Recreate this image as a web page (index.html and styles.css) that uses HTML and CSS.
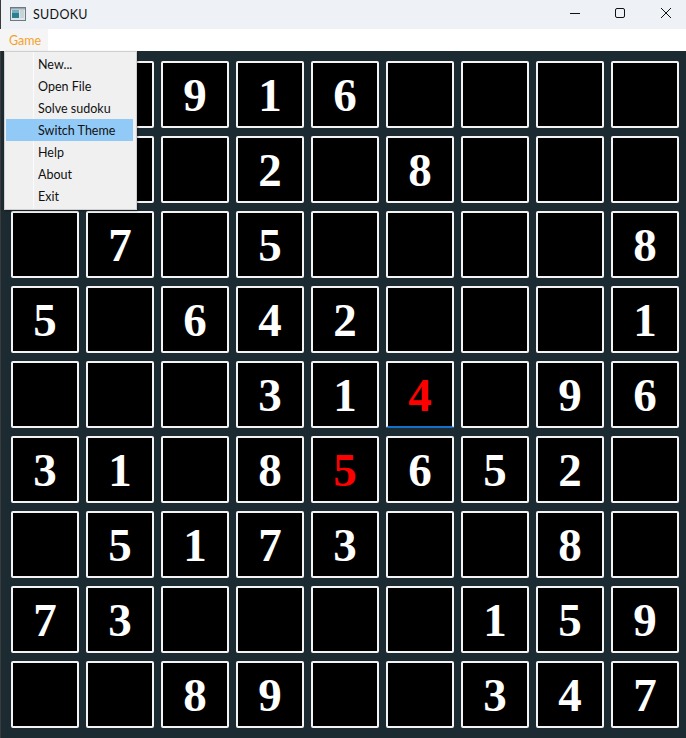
FILE: index.html
```html
<!DOCTYPE html>
<html>
<head>
<meta charset="utf-8">
<link rel="stylesheet" href="styles.css">
</head>
<body>
<div class="window">
  <div class="titlebar">
    <svg class="appicon" width="16" height="14" viewBox="0 0 16 14">
      <rect x="0.5" y="0.5" width="15" height="13" fill="#dfe6ea" stroke="#6c7a80"/>
      <rect x="2" y="3" width="7" height="8" fill="#2e7f8c"/>
      <rect x="2" y="3" width="7" height="3" fill="#6fb0c8"/>
      <rect x="10" y="3" width="4" height="8" fill="#c9d4d8"/>
      <rect x="1" y="1" width="14" height="1.5" fill="#9aa8ae"/>
    </svg>
    <span class="title">SUDOKU</span>
    <div class="controls">
      <svg class="ctl" width="46" height="29" viewBox="0 0 46 29"><line x1="22" y1="13.5" x2="32" y2="13.5" stroke="#111" stroke-width="1"/></svg>
      <svg class="ctl" width="46" height="29" viewBox="0 0 46 29"><rect x="21.5" y="8.5" width="9" height="9" rx="1.5" fill="none" stroke="#111" stroke-width="1"/></svg>
      <svg class="ctl" width="46" height="29" viewBox="0 0 46 29"><path d="M21 8 L31 18 M31 8 L21 18" stroke="#111" stroke-width="1"/></svg>
    </div>
  </div>
  <div class="menubar"><span class="menu-game">Game</span></div>
  <div class="board">
    <div class="grid">
      <div class="cell"></div><div class="cell"></div><div class="cell">9</div><div class="cell">1</div><div class="cell">6</div><div class="cell"></div><div class="cell"></div><div class="cell"></div><div class="cell"></div>
      <div class="cell"></div><div class="cell"></div><div class="cell"></div><div class="cell">2</div><div class="cell"></div><div class="cell">8</div><div class="cell"></div><div class="cell"></div><div class="cell"></div>
      <div class="cell"></div><div class="cell">7</div><div class="cell"></div><div class="cell">5</div><div class="cell"></div><div class="cell"></div><div class="cell"></div><div class="cell"></div><div class="cell">8</div>
      <div class="cell">5</div><div class="cell"></div><div class="cell">6</div><div class="cell">4</div><div class="cell">2</div><div class="cell"></div><div class="cell"></div><div class="cell"></div><div class="cell">1</div>
      <div class="cell"></div><div class="cell"></div><div class="cell"></div><div class="cell">3</div><div class="cell">1</div><div class="cell red focus">4</div><div class="cell"></div><div class="cell">9</div><div class="cell">6</div>
      <div class="cell">3</div><div class="cell">1</div><div class="cell"></div><div class="cell">8</div><div class="cell red">5</div><div class="cell">6</div><div class="cell">5</div><div class="cell">2</div><div class="cell"></div>
      <div class="cell"></div><div class="cell">5</div><div class="cell">1</div><div class="cell">7</div><div class="cell">3</div><div class="cell"></div><div class="cell"></div><div class="cell">8</div><div class="cell"></div>
      <div class="cell">7</div><div class="cell">3</div><div class="cell"></div><div class="cell"></div><div class="cell"></div><div class="cell"></div><div class="cell">1</div><div class="cell">5</div><div class="cell">9</div>
      <div class="cell"></div><div class="cell"></div><div class="cell">8</div><div class="cell">9</div><div class="cell"></div><div class="cell"></div><div class="cell">3</div><div class="cell">4</div><div class="cell">7</div>
    </div>
  </div>
  <div class="popup">
    <div class="item">New...</div>
    <div class="item">Open File</div>
    <div class="item">Solve sudoku</div>
    <div class="item hl">Switch Theme</div>
    <div class="item">Help</div>
    <div class="item">About</div>
    <div class="item">Exit</div>
  </div>
</div>
</body>
</html>
```
FILE: styles.css
```css
* { box-sizing: border-box; }
html, body { margin: 0; padding: 0; }
body { width: 686px; height: 738px; overflow: hidden; background: #1c2a32; font-family: "Lato", "Noto Sans", sans-serif; }
.window { position: relative; width: 686px; height: 738px; border-left: 1px solid #3b3b3b; display: flex; flex-direction: column; }
.titlebar { height: 29px; background: #eef2f7; display: flex; align-items: center; padding-left: 9px; flex: none; }
.appicon { display: block; margin-top: -1px; }
.title { font-size: 12.5px; color: #111; margin-left: 7px; letter-spacing: 0.3px; }
.controls { margin-left: auto; display: flex; }
.ctl { display: block; }
.menubar { height: 22px; background: #ffffff; flex: none; display: flex; }
.menu-game { background: #f5f5f5; color: #f4a22c; font-size: 12.5px; padding: 4px 7px 0 9px; width: 48px; margin-left: -1px; }
.board { flex: 1; background: #1c2a32; padding: 10px 0 0 10px; }
.grid { display: grid; grid-template-columns: repeat(9, 68px); grid-auto-rows: 67px; column-gap: 7px; row-gap: 8px; }
.cell { background: #000; border: 2px solid #f4f4f4; border-radius: 2px; color: #fff; font-family: "Liberation Serif", "DejaVu Serif", serif; font-weight: bold; font-size: 47px; display: flex; align-items: center; justify-content: center; line-height: 1; padding-top: 2px; }
.cell.red { color: #ff0000; }
.cell.focus { border-bottom: 2px solid #1670c8; }
.popup { position: absolute; left: 3px; top: 51px; width: 133px; height: 159px; background: #f0f0f0; border: 1px solid #cfcfcf; box-shadow: 1px 1px 2px rgba(0,0,0,0.35); padding-top: 1px; display: flex; flex-direction: column; }
.popup::before { content: ""; position: absolute; left: 28px; top: 0; bottom: 0; width: 1px; background: #fbfbfb; }
.item { height: 22px; font-size: 12.5px; color: #111; padding-left: 32px; display: flex; align-items: center; margin: 0 3px 0 1px; position: relative; z-index: 1; }
.item.hl { background: #91c9f7; }
```
